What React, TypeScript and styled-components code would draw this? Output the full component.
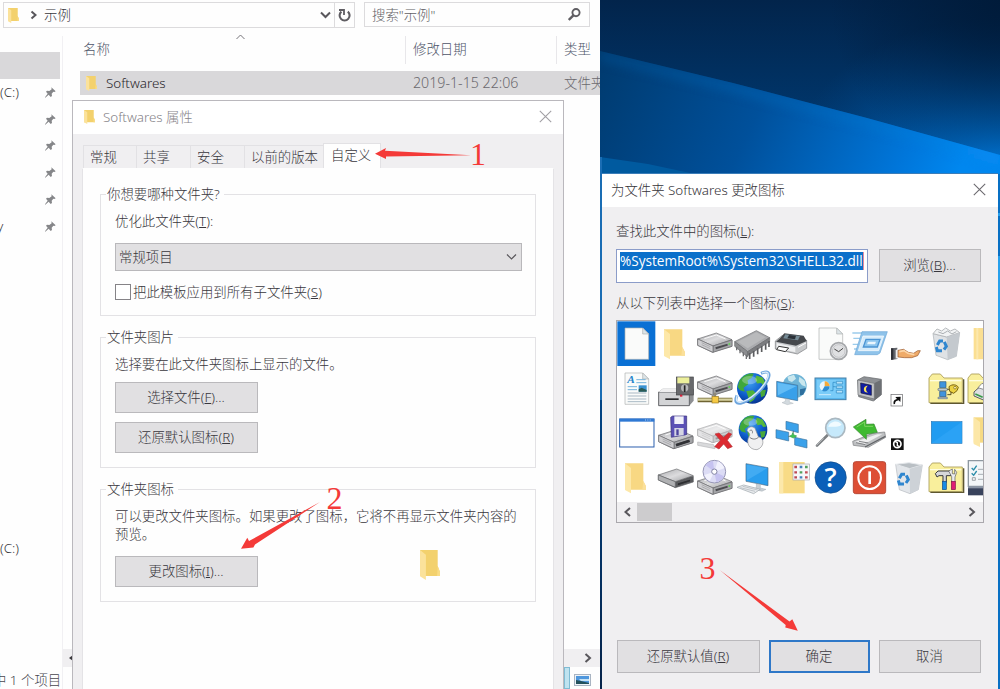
import React from "react";
import styled, { createGlobalStyle } from "styled-components";

const Global = createGlobalStyle`
  * { box-sizing: border-box; }
  body {
    margin: 0;
    overflow: hidden;
    font-family: "Noto Sans", "Noto Sans CJK SC", sans-serif;
    font-size: 13.4px;
    font-weight: 300;
    line-height: 18px;
    color: #38363c;
  }
  svg { display: block; flex: none; }
`;

/* ---------- desktop ---------- */
const Desktop = styled.main`
  position: relative;
  width: 1000px;
  height: 689px;
  overflow: hidden;
  background: #032a52;
`;
const Wallpaper = styled.svg`
  position: absolute;
  left: 600px;
  top: 0;
`;
const Marks = styled.svg`
  position: absolute;
  left: 0;
  top: 0;
  pointer-events: none;
`;

/* ---------- explorer ---------- */
const Explorer = styled.section`
  position: absolute;
  left: 0;
  top: 0;
  width: 600px;
  height: 689px;
  background: #fefefe;
  display: flex;
  flex-direction: column;
  overflow: hidden;
`;
const TopBar = styled.div`
  display: flex;
  padding: 2px 10px 0 3px;
  height: 36px;
  gap: 9px;
  flex: none;
`;
const AddressBar = styled.div`
  width: 352px;
  height: 26px;
  border: 1px solid #dcdbdd;
  display: flex;
  align-items: center;
  padding-left: 4px;
`;
const Crumb = styled.span`
  margin: 0 7px 0 11px;
`;
const AddressText = styled.span`
  flex: 1;
`;
const Refresh = styled.div`
  width: 20px;
  height: 24px;
  margin-left: 3px;
  border-left: 1px solid #dcdbdd;
  display: flex;
  align-items: center;
  justify-content: center;
`;
const SearchBox = styled.div`
  width: 226px;
  height: 25px;
  border: 1px solid #dcdbdd;
  display: flex;
  align-items: center;
  justify-content: space-between;
  padding: 0 8px 0 7px;
  color: #616064;
`;
const Main = styled.div`
  display: flex;
  flex: 1;
  min-height: 0;
`;
const Nav = styled.nav`
  width: 63px;
  border-right: 1px solid #f1f0f3;
  padding-top: 16px;
  flex: none;
`;
const NavItem = styled.div<{ $active?: boolean; $gap?: number }>`
  height: ${(p) => (p.$active ? 27 : 26.8)}px;
  margin-top: ${(p) => p.$gap ?? 0}px;
  width: 60px;
  background: ${(p) => (p.$active ? "#d9d8da" : "transparent")};
  display: flex;
  align-items: center;
  justify-content: space-between;
  padding-right: 4px;
  white-space: nowrap;
`;
const Clipped = styled.span`
  margin-left: -3px;
`;
const Status = styled.div`
  margin: 109px 0 0 -7px;
  white-space: nowrap;
  color: #47464f;
`;
const Files = styled.div`
  flex: 1;
  display: flex;
  flex-direction: column;
  min-width: 0;
`;
const Columns = styled.div`
  height: 35px;
  display: grid;
  grid-template-columns: 343px 151px 50px;
  color: #4d5468;
`;
const Column = styled.div<{ $pad: number }>`
  height: 28px;
  padding: 4px 0 0 ${(p) => p.$pad}px;
  border-right: 1px solid #e8e7ea;
  display: flex;
  white-space: nowrap;
`;
const SortMark = styled.span`
  margin: -6px 0 0 126px;
`;
const FileRow = styled.div`
  margin-left: 17px;
  height: 24px;
  background: #d9d8da;
  display: grid;
  grid-template-columns: 26px 307px 151px 60px;
  align-items: center;
  color: #6b696e;
  white-space: nowrap;
  overflow: hidden;
`;
const FileIcon = styled.span`
  padding-left: 6px;
`;
const FileName = styled.span`
  color: #29272c;
`;
const FileDate = styled.span`
  font-size: 14.2px;
`;
const FileScroll = styled.div`
  margin-top: auto;
  height: 18px;
  background: #f0eff1;
  display: flex;
  align-items: center;
  justify-content: space-between;
  padding: 0 8px 0 6px;
`;
const ViewModes = styled.div`
  height: 22px;
  padding-left: 501px;
  display: flex;
  align-items: flex-end;
  gap: 4px;
`;
const ModeSelected = styled.span`
  width: 6px;
  height: 22px;
  background: #bfe3f0;
  border: 1px solid #7fbcd4;
`;
const ModeIcon = styled.span`
  padding-bottom: 3px;
`;

/* ---------- dialogs ---------- */
const Properties = styled.section`
  position: absolute;
  left: 72px;
  top: 100px;
  width: 492px;
  height: 620px;
  background: #f0eff1;
  border: 1px solid #bab8bd;
`;
const ChangeIcon = styled.section`
  position: absolute;
  left: 602px;
  top: 173px;
  width: 396px;
  height: 560px;
  background: #f0eff1;
  border-top: 1px solid #3b7db8;
`;
const TitleBar = styled.header<{ $muted?: boolean }>`
  height: 33px;
  background: #fff;
  display: flex;
  align-items: center;
  padding: 0 ${(p) => (p.$muted ? 11 : 12)}px 2px ${(p) => (p.$muted ? 11 : 9)}px;
  color: ${(p) => (p.$muted ? "#87858a" : "#353338")};
`;
const TitleText = styled.span<{ $gap?: number }>`
  flex: 1;
  margin-left: ${(p) => p.$gap ?? 0}px;
`;
const Tabs = styled.div`
  height: 34px;
  padding-left: 10px;
  display: flex;
  align-items: flex-end;
`;
const Tab = styled.div<{ $w: number; $active?: boolean }>`
  width: ${(p) => p.$w}px;
  height: ${(p) => (p.$active ? 25 : 23)}px;
  background: ${(p) => (p.$active ? "#fefefe" : "#f0eff1")};
  border: 1px solid #e2e1e4;
  border-bottom: 0;
  margin-right: ${(p) => (p.$active ? 0 : -1)}px;
  padding: 2px 0 0 ${(p) => (p.$active ? 7 : 6)}px;
  white-space: nowrap;
`;
const Page = styled.div`
  margin-left: 9px;
  width: 472px;
  height: 540px;
  background: #fefefe;
  border: 1px solid #e4e3e6;
  border-top-color: #fefefe;
  padding: 16px 17px 0 17px;
`;
const Group = styled.fieldset<{ $h: number; $gap: number }>`
  margin: 0 0 ${(p) => p.$gap}px;
  height: ${(p) => p.$h}px;
  min-width: 0;
  border: 1px solid #e3e2e5;
  padding: 9px 13px 0 14px;
`;
const Legend = styled.legend`
  margin-left: -9px;
  padding: 0 4px 0 1px;
  height: 18px;
`;
const Select = styled.div`
  margin-top: 13px;
  height: 28px;
  background: #e1e0e2;
  border: 1px solid #b9b8bb;
  display: flex;
  align-items: center;
  justify-content: space-between;
  padding: 0 4px 1px 3px;
`;
const CheckRow = styled.div`
  display: flex;
  align-items: center;
  gap: 2px;
  margin-top: 12px;
`;
const Box = styled.span`
  width: 16px;
  height: 16px;
  border: 1px solid #858387;
  background: #fff;
`;
const Button = styled.button<{ $w: number; $h?: number; $primary?: boolean; $top?: number }>`
  display: block;
  width: ${(p) => p.$w}px;
  height: ${(p) => p.$h ?? 31}px;
  margin: ${(p) => p.$top ?? 0}px 0 0;
  padding: 0 1px 2px 0;
  background: #e1e0e2;
  border: ${(p) => (p.$primary ? "2px solid #2f78c8" : "1px solid #bab9bc")};
  font: inherit;
  color: inherit;
`;
const IconPreview = styled.div`
  display: flex;
  justify-content: space-between;
  padding-right: 82px;
`;
const PreviewIcon = styled.span`
  margin-top: 7px;
`;
const Body = styled.div`
  padding: 15px 14px 0 14px;
`;
const PathRow = styled.div`
  display: flex;
  gap: 11px;
  margin: 9px 0 11px;
`;
const PathField = styled.div`
  width: 252px;
  height: 34px;
  background: #fff;
  border: 1px solid #8b9cc9;
  padding: 2px 3px;
  white-space: nowrap;
`;
const Selection = styled.span`
  display: block;
  width: 244px;
  height: 18px;
  overflow: hidden;
  background: #0b70ca;
  color: #fff;
  border-right: 1px solid #e08aa0;
  font-family: "Open Sans", sans-serif;
  font-size: 13.6px;
  font-weight: 400;
  line-height: 17px;
`;
const IconList = styled.div`
  margin-top: 8px;
  width: 368px;
  height: 203px;
  border: 1px solid #aaa8ad;
  background: #fff;
  display: flex;
  flex-direction: column;
  overflow: hidden;
`;
const IconGrid = styled.div`
  height: 181px;
  width: 366px;
  overflow: hidden;
  display: grid;
  grid-template-columns: repeat(10, 38.8px);
  grid-template-rows: repeat(4, 44.67px);
`;
const ListScroll = styled.div`
  flex: 1;
  background: #f0eff1;
  display: flex;
  align-items: center;
  padding: 0 7px;
`;
const Thumb = styled.span`
  width: 35px;
  height: 18px;
  background: #cdccce;
  margin: 0 auto 0 6px;
`;
const Actions = styled.div`
  display: flex;
  gap: 9px;
  margin-top: 117px;
  padding-left: 1px;
`;
const U = styled.u`
  text-underline-offset: 1px;
  text-decoration-thickness: 1px;
`;

/* ---------- small icons ---------- */
const Folder = ({ w, h }: { w: number; h: number }) => (
  <svg width={w} height={h} viewBox="0 0 61 90" preserveAspectRatio="none">
    <path d="M0 0H54V48L61 66V78H0Z" fill="#f3d16d" />
    <path d="M54 48L61 66V78H52Z" fill="#f9dc86" />
    <path d="M0 0L18 14V90L0 79Z" fill="#fbe29b" />
  </svg>
);
const Chevron = ({ d, w = 10, h = 10, s = "#59575c", t = 2 }: { d: string; w?: number; h?: number; s?: string; t?: number }) => (
  <svg width={w} height={h} viewBox={`0 0 ${w} ${h}`}>
    <path d={d} fill="none" stroke={s} strokeWidth={t} />
  </svg>
);
const Close = ({ c }: { c: string }) => (
  <svg width="13" height="13" viewBox="0 0 13 13">
    <path d="M.8 .8L12.2 12.2M12.2 .8L.8 12.2" stroke={c} strokeWidth="1.1" />
  </svg>
);
const Pin = () => (
  <svg width="11" height="11" viewBox="0 0 33 33">
    <path d="M19 1L32 13L28 15L25 14L20 20L21 27L17 30L11 23L1 32L0 31L8 20L3 14L6 11L13 12L20 7Z" fill="#858689" />
  </svg>
);

/* ---------- icon library glyphs, each drawn on a 116.4 x 134 cell ---------- */
const Drive = ({ y = 0, x = 0, light = true }: { y?: number; x?: number; light?: boolean }) => (
  <g transform={`translate(${x} ${y})`} stroke="#6b6b6e" strokeWidth="2">
    <path d="M8 54V73L52 94L111 76V57Z" fill="#909194" />
    <path d="M8 54L64 36L111 56L54 75Z" fill="url(#metal)" />
    <path d="M54 75V94L111 76V57Z" fill="#a4a5a8" />
    <path d="M8 54L54 75V94L8 73Z" fill="#cfcfd2" />
    <path d="M28 53L64 42L92 54" fill="none" stroke="#fafafa" strokeWidth="3" />
    <path d="M20 65L46 77M20 71L46 83" stroke="#98999c" />
    <path d="M62 82L98 71" stroke="#4b4b4f" strokeWidth="6" />
    {light && <circle cx="103" cy="69" r="3" fill="#62cf55" stroke="none" />}
  </g>
);
const Sheet = () => (
  <g>
    <path d="M24 21H77L95 39V115H24Z" fill="#fafbfa" stroke="#aeb0b0" strokeWidth="2" />
    <path d="M77 21V39H95Z" fill="#dde5e8" stroke="#aeb0b0" strokeWidth="2" />
  </g>
);
const BigFolder = () => (
  <g>
    <path d="M24 25H79V78L87 94V104H24Z" fill="#f8d883" />
    <path d="M24 25L42 39V115L24 105Z" fill="#fde8a9" />
    <path d="M79 78L87 94V104H76Z" fill="#fbe09a" />
  </g>
);
const OldFolder = () => (
  <g>
    <path d="M6 110V36L16 24H40L51 36H106V110Z" fill="#f9ef9c" stroke="#a89b55" strokeWidth="2.5" />
    <path d="M9 44H103" stroke="#fffde0" strokeWidth="4" />
    <path d="M10 112H110V40" fill="none" stroke="#5e5730" strokeWidth="4" />
  </g>
);
const Globe = ({ cx, cy, r }: { cx: number; cy: number; r: number }) => (
  <g transform={`translate(${cx} ${cy}) scale(${r / 45})`}>
    <circle r="45" fill="url(#sea)" />
    <path d="M-38 -22C-26 -42 -8 -46 4 -43L-2 -30L-14 -24L-12 -12L-26 -2L-22 10L-36 6L-43 -4Z" fill="#3fa83b" />
    <path d="M12 -38L30 -32L42 -10L32 -8L26 -16L14 -14L8 -26Z" fill="#57b93c" />
    <path d="M-18 8L2 6L14 18L4 34L-8 42L-12 26Z" fill="#4fb23a" />
    <path d="M22 6L40 4L36 22L26 26Z" fill="#49a83a" />
    <ellipse cx="-8" cy="-24" rx="22" ry="12" fill="#fff" opacity=".28" />
  </g>
);
const Recycle = ({ x, y }: { x: number; y: number }) => (
  <g transform={`translate(${x} ${y})`} fill="none" stroke="#2f86cf" strokeWidth="9">
    <path d="M-12 -3L-5 -15H5" />
    <path d="M9 -12L15 1L8 11" />
    <path d="M2 14H-12L-15 3" />
  </g>
);

const glyphs: React.ReactNode[] = [
  <>
    <rect x="1" y="1" width="114" height="134" fill="#0a70d4" />
    <Sheet />
  </>,
  <BigFolder />,
  <Drive />,
  <g stroke="#68696c" strokeWidth="2">
    <path d="M5 62L70 29L110 50L44 92Z" fill="#a9aaad" />
    <path d="M14 62L70 34L98 49L44 82Z" fill="#b9babc" stroke="none" />
    <path d="M5 62V76L44 108V92Z" fill="#8c8d90" />
    <path d="M44 92V104L110 62V50Z" fill="#7b7c7f" />
    <path d="M50 96V114M62 90V107M74 82V100M86 75V93M98 68V86M108 60V78" stroke="#5c5d60" strokeWidth="5" />
    <path d="M11 78V88M21 86V97M31 94V106M40 101V114" stroke="#6d6e71" strokeWidth="4" />
  </g>,
  <g>
    <path d="M10 60L30 44L104 58V82L76 99L10 84Z" fill="#c7c9cb" stroke="#77797c" strokeWidth="2" />
    <path d="M24 52L37 37L95 44L104 60L72 74L12 62Z" fill="#45484c" />
    <path d="M40 40L84 45L78 58L34 52Z" fill="#758b96" />
    <path d="M51 42L72 44L69 55L46 52Z" fill="#2b3138" />
    <path d="M14 66L70 79V94L14 82Z" fill="#eeeff0" />
    <path d="M20 76L50 81L40 92L14 86Z" fill="#fff" stroke="#333" strokeWidth="3" />
    <path d="M78 79L102 66" stroke="#fff" strokeWidth="3" />
  </g>,
  <g>
    <Sheet />
    <circle cx="83" cy="90" r="25" fill="#e5e6e8" stroke="#a5a7aa" strokeWidth="5" />
    <circle cx="83" cy="90" r="19" fill="#dfe0e2" stroke="#b5b7ba" strokeWidth="2" />
    <path d="M70 84L83 92L96 82" fill="none" stroke="#444" strokeWidth="3" />
  </g>,
  <g>
    <path d="M7 36H42M10 52H38M8 70H34M12 84H30" stroke="#9cccec" strokeWidth="4" />
    <path d="M36 32H112L90 96L82 101H14Z" fill="#8fc3ea" stroke="#6ba6d6" strokeWidth="2" />
    <path d="M39 45H101L86 89H25Z" fill="#d6ecfb" stroke="#fff" strokeWidth="2" />
    <path d="M48 55H90L82 78H40Z" fill="#8cc5ee" stroke="#4b94d3" strokeWidth="4" />
    <path d="M54 62H78L75 70H51Z" fill="#eaf6fe" />
  </g>,
  <g>
    <path d="M6 82L25 80V114L6 117Z" fill="#62656c" />
    <path d="M6 82H13V116H6Z" fill="#2e3036" />
    <path d="M20 87L27 85V111L20 113Z" fill="#eee" />
    <path d="M27 88L44 85L58 94L74 97L86 89L94 89L86 104L68 110H46L27 108Z" fill="#efab69" stroke="#94552c" strokeWidth="2" />
    <path d="M31 92L45 89L57 97L76 101" fill="none" stroke="#fbd5a8" strokeWidth="5" />
  </g>,
  <g>
    <path d="M18 38L59 48L98 35L88 106L62 116L27 103Z" fill="#dfe2e5" stroke="#abb0b5" strokeWidth="2" />
    <path d="M18 38L30 24L44 30L56 21L70 30L84 24L98 35L59 48Z" fill="#f1f3f4" stroke="#b7babd" strokeWidth="3" />
    <path d="M59 48L98 35L88 106L62 116Z" fill="#c4c9ce" />
    <path d="M34 33L48 38L62 30L75 39L88 32" fill="none" stroke="#abafb3" strokeWidth="3" />
    <Recycle x={43} y={75} />
  </g>,
  <>
    <path d="M23 21H110V115H23Z" fill="#fbdf92" />
    <path d="M34 21V115" stroke="#fce8ad" strokeWidth="6" />
  </>,

  <g>
    <Sheet />
    <text x="31" y="52" fontSize="34" fontStyle="italic" fontWeight="700" fill="#2684cb" fontFamily="Liberation Serif, serif">A</text>
    <path d="M58 41H86M58 50H88M32 62H60M32 71H60" stroke="#74b3dd" strokeWidth="3" />
    <path d="M32 81H88M32 90H88M32 99H88M32 107H88" stroke="#a9b9c4" strokeWidth="3" />
    <rect x="65" y="58" width="24" height="19" fill="#3a92d2" />
    <path d="M65 77V70L74 65L89 72V77Z" fill="#2b5b55" />
  </g>,
  <g>
    <path d="M8 78L20 68H113V104L100 119H8Z" fill="#8d8f92" />
    <path d="M8 78H100V119H8Z" fill="#d3d4d6" stroke="#66686b" strokeWidth="3" />
    <path d="M8 78L20 68H100V78Z" fill="#efeff0" />
    <rect x="28" y="97" width="40" height="5" fill="#28292b" />
    <rect x="61" y="33" width="51" height="54" fill="#68696c" stroke="#434447" strokeWidth="2" />
    <rect x="64" y="34" width="36" height="18" fill="#ecef9b" />
    <circle cx="86" cy="66" r="11" fill="#b6b7b9" />
    <path d="M86 58V78" stroke="#222" strokeWidth="5" />
    <rect x="72" y="86" width="7" height="6" fill="#d8213b" />
  </g>,
  <g>
    <Drive y={-6} />
    <path d="M8 102H112" stroke="#6f6432" strokeWidth="14" />
    <path d="M9 101H111" stroke="#d8d3a2" strokeWidth="7" />
    <path d="M60 80V94" stroke="#8f8a78" strokeWidth="7" />
    <rect x="51" y="91" width="19" height="20" fill="#f6c944" stroke="#967926" strokeWidth="2" />
  </g>,
  <g>
    <Globe cx={58} cy={67} r={46} />
    <path d="M84 22C126 4 108 50 70 84C38 112 -4 128 12 88" fill="none" stroke="#6fa6de" strokeWidth="9" />
    <path d="M87 21C122 8 104 50 69 82C38 110 0 122 13 88" fill="none" stroke="#d9ebfa" strokeWidth="4" />
  </g>,
  <g>
    <circle cx="68" cy="60" r="36" fill="#6fb4d6" />
    <path d="M46 32L66 26L72 38L60 48L50 44ZM82 32L98 44L102 62L90 58L80 46Z" fill="#c9e7ee" />
    <path d="M84 70L102 66L94 86L84 88Z" fill="#2e6f9e" />
    <path d="M14 46L77 58V104L14 92Z" fill="#38a0ea" stroke="#456f93" strokeWidth="2" />
    <path d="M17 50L74 60L18 88Z" fill="#63bcf5" />
    <path d="M40 98L52 100V108L64 112L46 116L30 110L40 106Z" fill="#d3dadf" stroke="#9aa3aa" strokeWidth="1" />
  </g>,
  <g>
    <rect x="12" y="36" width="93" height="65" fill="#56b5ec" stroke="#4780a8" strokeWidth="3" />
    <rect x="17" y="41" width="83" height="55" fill="#7accf8" />
    <circle cx="41" cy="61" r="15" fill="#eaf6fc" />
    <path d="M41 61V46A15 15 0 0 1 56 61Z" fill="#f6aa38" />
    <path d="M41 61H56A15 15 0 0 1 33 74Z" fill="#2d8ed3" />
    <path d="M58 74H66V49H74M66 62H74" fill="none" stroke="#2787c2" strokeWidth="2" />
    <path d="M76 46H95V54H76ZM76 60H95V67H76ZM76 73H95V81H76Z" fill="#b5e1f8" stroke="#2787c2" strokeWidth="2" />
    <path d="M24 86H60" stroke="#c9ebfc" strokeWidth="3" />
  </g>,
  <g>
    <path d="M23 42L42 32L94 40V86L70 105L26 92Z" fill="#8e9195" stroke="#606367" strokeWidth="2" />
    <path d="M72 52L94 41V86L72 104Z" fill="#6d7074" />
    <path d="M23 42L73 52V99L24 87Z" fill="#c1c3c6" stroke="#707276" strokeWidth="2" />
    <path d="M32 51L64 58V88L33 81Z" fill="#111ea3" stroke="#0d1238" strokeWidth="2" />
    <path d="M53 59C43 58 38 70 45 78L54 80C47 74 46 66 53 59Z" fill="#fbe557" />
  </g>,
  <g>
    <rect x="6" y="86" width="34" height="34" fill="#fff" stroke="#646568" strokeWidth="2" />
    <path d="M14 115C12 105 16 101 24 99L19 93L35 92L34 108L29 103C22 104 18 107 18 114Z" fill="#111" />
  </g>,
  <g>
    <OldFolder />
    <path d="M38 47H57V65H38ZM38 76H57V92H38Z" fill="#3f93dd" stroke="#305a83" strokeWidth="2" />
    <path d="M33 68H61V73H33ZM33 94H61V98H33Z" fill="#dfe6ef" stroke="#50657a" strokeWidth="2" />
    <path d="M61 70H72V86H61M72 78H80" fill="none" stroke="#554b25" strokeWidth="3" />
    <path d="M66 62C76 53 90 56 94 64L90 74L80 82L68 76Z" fill="#ecd242" stroke="#776112" strokeWidth="3" />
    <circle cx="84" cy="65" r="4" fill="#fff6b0" stroke="#776112" strokeWidth="2" />
  </g>,
  <g>
    <OldFolder />
    <path d="M24 78L46 58L80 70V90L52 102L24 90Z" fill="#dfe0e2" stroke="#5b5c5f" strokeWidth="3" />
    <path d="M36 65L48 52L66 60L58 72Z" fill="#fff" stroke="#5b5c5f" strokeWidth="2" />
    <path d="M28 84L50 94" stroke="#3a9a4a" strokeWidth="5" />
  </g>,

  <g>
    <rect x="8" y="27" width="103" height="84" fill="#fff" stroke="#2b5fae" strokeWidth="3" />
    <rect x="7" y="26" width="105" height="9" fill="#2f79d4" />
    <path d="M84 30H104" stroke="#fff" strokeWidth="2" strokeDasharray="3 4" />
  </g>,
  <g>
    <g transform="translate(0 22)"><Drive light={false} /></g>
    <path d="M44 22L50 18H92V74L46 82Z" fill="#5b51b5" stroke="#383078" strokeWidth="2" />
    <path d="M55 19H83V42H55Z" fill="#f2f2fa" />
    <path d="M55 54H83V76L55 79Z" fill="#d4d5e3" />
    <path d="M61 58H68V76H61Z" fill="#4b439d" />
    <path d="M60 106L101 92" stroke="#303135" strokeWidth="8" />
  </g>,
  <g>
    <g opacity=".55"><Drive y={4} light={false} /></g>
    <path d="M8 96L56 104L60 116L8 106Z" fill="#d9dadc" stroke="#b6b7ba" strokeWidth="2" />
    <path d="M60 72L72 69L86 82L101 68L110 72L97 91L112 110L98 116L86 102L72 117L59 110L76 91Z" fill="#dc2a31" stroke="#b5383c" strokeWidth="2" />
  </g>,
  <g>
    <Globe cx={60} cy={59} r={43} />
    <path d="M42 61C46 46 66 48 68 60L76 80C96 84 94 112 72 119C48 120 38 96 48 80C54 72 46 68 42 61Z" fill="#f0f0f1" stroke="#8f9194" strokeWidth="2" />
    <path d="M50 82C60 90 70 88 77 81M50 62C56 58 60 62 58 70" fill="none" stroke="#77797c" strokeWidth="3" />
  </g>,
  <g stroke="#44759d" strokeWidth="2">
    <path d="M42 34L79 43V68L42 58Z" fill="#3aa1ea" />
    <path d="M12 59L50 67V93L12 84Z" fill="#3aa1ea" />
    <path d="M68 82L105 90V114L68 105Z" fill="#3aa1ea" />
    <path d="M49 80L58 77M64 62V74M72 82L66 78" stroke="#53595e" />
    <path d="M62 68L64 74L74 78L64 84L53 79L60 75Z" fill="#42c353" stroke="#30a747" />
  </g>,
  <g>
    <path d="M50 75L18 107" stroke="#7d8083" strokeWidth="8" strokeLinecap="round" />
    <path d="M38 85L17 106" stroke="#b5b7b9" strokeWidth="3" />
    <circle cx="73" cy="54" r="29" fill="#c6e9fb" stroke="#aab8c1" strokeWidth="5" />
    <path d="M52 51C55 36 79 27 92 44C78 54 64 49 52 51Z" fill="#f1fbff" />
  </g>,
  <g>
    <path d="M8 94L68 70L104 66L107 82L55 112L10 106Z" fill="#bec0c2" stroke="#77797c" strokeWidth="2" />
    <path d="M14 96L82 73L97 73L43 102Z" fill="#efeff0" />
    <path d="M45 111L106 79" stroke="#626468" strokeWidth="4" />
    <path d="M18 98L46 104M27 94L55 99" stroke="#818386" strokeWidth="3" />
    <path d="M10 51L48 28V43L72 42L82 67L49 73V88Z" fill="#3fba31" stroke="#34852c" strokeWidth="2" />
    <path d="M20 51L44 36V49H69" fill="none" stroke="#7ed562" strokeWidth="3" />
  </g>,
  <g>
    <rect x="6" y="85" width="38" height="35" fill="#111" />
    <circle cx="25" cy="102" r="11" fill="none" stroke="#fff" strokeWidth="5" />
    <path d="M18 94L25 98V107L32 110" fill="none" stroke="#fff" strokeWidth="4" />
  </g>,
  <g>
    <rect x="13" y="35" width="92" height="65" fill="#219cf1" stroke="#2479bb" strokeWidth="2" />
    <path d="M14 99L104 36V99Z" fill="#2ba2f5" />
  </g>,
  <>
    <path d="M23 22H110V98H23Z" fill="#f7da83" />
    <path d="M23 22L42 36V111L23 102Z" fill="#fce7a7" />
  </>,

  <BigFolder />,
  <g stroke="#67686b" strokeWidth="2">
    <path d="M7 60V75L58 98L112 81V64Z" fill="#57585b" />
    <path d="M7 60L62 42L112 62L58 80Z" fill="url(#metal)" />
    <path d="M7 60L58 80V97L7 75Z" fill="#b0b1b3" />
    <path d="M64 84L104 72V80L64 93Z" fill="#2e2f32" />
  </g>,
  <g>
    <Drive y={24} />
    <circle cx="58" cy="50" r="34" fill="#dcdcf5" stroke="#9797b6" strokeWidth="3" />
    <path d="M58 50L32 31A32 32 0 0 1 54 18ZM58 50L87 64A32 32 0 0 1 64 81Z" fill="#c6c3f0" />
    <path d="M58 50L68 19A32 32 0 0 1 88 40ZM58 50L28 60A32 32 0 0 0 44 78Z" fill="#f2f2fd" />
    <circle cx="58" cy="50" r="8" fill="#fff" stroke="#8183a4" strokeWidth="3" />
  </g>,
  <g>
    <path d="M39 26L105 38V92L39 79Z" fill="#299ded" stroke="#4b6a84" strokeWidth="2" />
    <path d="M41 29L102 40L42 76Z" fill="#42abf2" />
    <path d="M70 87L82 89V99L99 103L87 109L60 102L70 98Z" fill="#c8cfd4" stroke="#8d969d" strokeWidth="1" />
    <path d="M12 97L32 90L82 103L62 116Z" fill="#e8ebed" stroke="#9ba3a9" strokeWidth="2" />
    <path d="M22 98L66 109M29 94L74 105" stroke="#aab1b6" strokeWidth="2" />
  </g>,
  <g>
    <path d="M22 21H98V115H22Z" fill="#f8db86" />
    <path d="M22 21H34V115H22Z" fill="#fce8ab" />
    <rect x="63" y="27" width="49" height="48" fill="#f7f7f9" stroke="#a7a9ae" strokeWidth="2" />
    <path d="M67 36H75M67 52H75M67 67H75" stroke="#bc4a54" strokeWidth="7" />
    <path d="M83 36H91M83 67H91" stroke="#4681bd" strokeWidth="7" />
    <path d="M83 52H91M99 36H107" stroke="#52a15e" strokeWidth="7" />
    <path d="M99 52H107M99 67H107" stroke="#c54e58" strokeWidth="7" />
  </g>,
  <g>
    <circle cx="59" cy="67.5" r="47" fill="#0b60b9" stroke="#154b87" strokeWidth="2" />
    <text x="59" y="96" textAnchor="middle" fontSize="80" fill="#fff" fontFamily="Open Sans, sans-serif" fontWeight="600">?</text>
  </g>,
  <g>
    <rect x="10" y="20" width="97" height="96" rx="7" fill="#dd4f35" stroke="#b94836" strokeWidth="3" />
    <circle cx="59" cy="68" r="34" fill="none" stroke="#fff" strokeWidth="6" />
    <path d="M59 49V87" stroke="#fff" strokeWidth="8" />
  </g>,
  <g>
    <path d="M20 28L62 38L100 30L88 104L63 116L31 104Z" fill="#e3e6ea" stroke="#b5babf" strokeWidth="2" />
    <path d="M20 28L60 23L100 30L62 41Z" fill="#b9bfc4" stroke="#e6e9ec" strokeWidth="3" />
    <path d="M62 41L99 31L88 104L63 116Z" fill="#cdd2d7" />
    <Recycle x={43} y={73} />
  </g>,
  <g>
    <OldFolder />
    <path d="M25 56L33 48H72V62H58V82H48V62H36L30 66Z" fill="#d6d7d9" stroke="#37383b" strokeWidth="3" />
    <path d="M65 48L76 42V56L83 57V43L89 52L84 66V82H74V65Z" fill="#ececee" stroke="#55575a" strokeWidth="2" />
    <rect x="46" y="79" width="12" height="25" fill="#178be4" stroke="#174b83" strokeWidth="2" />
    <rect x="73" y="79" width="12" height="25" fill="#e01c74" stroke="#7e1744" strokeWidth="2" />
  </g>,
  <g>
    <path d="M7 17H100V94H7Z" fill="#f3f6f8" stroke="#8e98a0" strokeWidth="4" />
    <path d="M17 39L23 45L32 32M17 55L23 61L32 48" fill="none" stroke="#2a8da9" strokeWidth="4" />
    <path d="M19 68H28V76H19Z" fill="none" stroke="#777e84" strokeWidth="2" />
    <path d="M36 43H70M36 58H70M36 73H70" stroke="#a8afb5" strokeWidth="3" />
    <path d="M6 97H100V121H6Z" fill="#39435c" />
    <path d="M6 94H100V100H6Z" fill="#8a94a4" />
  </g>,
];

const GlyphDefs = () => (
  <defs>
    <linearGradient id="metal" x1="0" y1="0" x2="1" y2="1">
      <stop offset="0" stopColor="#a8a9ac" />
      <stop offset=".5" stopColor="#dcdcde" />
      <stop offset="1" stopColor="#98999c" />
    </linearGradient>
    <radialGradient id="sea" cx=".4" cy=".3" r=".75">
      <stop offset="0" stopColor="#3fa0f0" />
      <stop offset=".6" stopColor="#0d5ccb" />
      <stop offset="1" stopColor="#062f8a" />
    </radialGradient>
  </defs>
);

export default function App() {
  return (
    <Desktop>
      <Global />
      <Wallpaper width="400" height="689" viewBox="0 0 400 689">
        <defs>
          <linearGradient id="sky" x1="0" y1="0" x2="0" y2="1">
            <stop offset="0" stopColor="#02244b" />
            <stop offset=".2" stopColor="#003a72" />
            <stop offset=".5" stopColor="#004a90" />
            <stop offset="1" stopColor="#062349" />
          </linearGradient>
          <radialGradient id="glow" gradientUnits="userSpaceOnUse" cx="400" cy="165" r="210" gradientTransform="translate(0 50) scale(1 .7)">
            <stop offset="0" stopColor="#0079dc" />
            <stop offset=".4" stopColor="#0062b7" stopOpacity=".75" />
            <stop offset="1" stopColor="#004a90" stopOpacity="0" />
          </radialGradient>
          <radialGradient id="corner" gradientUnits="userSpaceOnUse" cx="400" cy="0" r="170">
            <stop offset="0" stopColor="#001b3a" />
            <stop offset="1" stopColor="#001b3a" stopOpacity="0" />
          </radialGradient>
          <linearGradient id="beam" x1="0" y1="0" x2="1" y2=".2">
            <stop offset="0" stopColor="#003a6e" />
            <stop offset=".45" stopColor="#00509b" />
            <stop offset=".85" stopColor="#0076da" />
            <stop offset="1" stopColor="#0087ef" />
          </linearGradient>
          <linearGradient id="edge" x1="0" y1="0" x2="1" y2="0">
            <stop offset="0" stopColor="#064a88" />
            <stop offset=".5" stopColor="#0564b5" />
            <stop offset="1" stopColor="#078df5" />
          </linearGradient>
          <filter id="soft"><feGaussianBlur stdDeviation="4" /></filter>
          <clipPath id="below"><path d="M0 51L133 83L267 118L400 155V220H0Z" /></clipPath>
        </defs>
        <rect width="400" height="689" fill="url(#sky)" />
        <rect width="400" height="200" fill="url(#glow)" />
        <rect width="400" height="170" fill="url(#corner)" />
        <g clipPath="url(#below)">
          <rect y="51" width="400" height="169" fill="url(#beam)" />
          <path d="M0 56L133 88L267 123L400 160" fill="none" stroke="url(#edge)" strokeWidth="12" opacity=".6" filter="url(#soft)" />
        </g>
        <path d="M0 157L48 164L95 174H0Z" fill="#005a9f" />
        <path d="M0 157H2V400H0Z" fill="#1a6db4" />
        <path d="M397 174H400V689H397Z" fill="#0870c4" />
        <path d="M397 213H400V216H397ZM397 256H400V360H397Z" fill="#27a0ec" />
      </Wallpaper>

      <Explorer>
        <TopBar>
          <AddressBar>
            <Folder w={11} h={15} />
            <Crumb><Chevron d="M1.5 1.5L5.5 5L1.5 8.5" w={7} /></Crumb>
            <AddressText>示例</AddressText>
            <Chevron d="M1 2.5L5.5 7L10 2.5" w={11} h={10} />
            <Refresh>
              <svg width="13" height="13" viewBox="0 0 13 13">
                <path d="M9.8 2.6A5 5 0 1 1 3.4 2.6" fill="none" stroke="#5f5d62" strokeWidth="2.1" />
                <path d="M1 1H6V6" fill="none" stroke="#5f5d62" strokeWidth="1.8" />
              </svg>
            </Refresh>
          </AddressBar>
          <SearchBox>
            搜索"示例"
            <svg width="13" height="13" viewBox="0 0 13 13">
              <circle cx="8" cy="4.6" r="3.6" fill="none" stroke="#605e63" strokeWidth="1.9" />
              <path d="M5.4 7.4L.8 12" stroke="#605e63" strokeWidth="2.4" />
            </svg>
          </SearchBox>
        </TopBar>
        <Main>
          <Nav>
            <NavItem $active />
            <NavItem>(C:)<Pin /></NavItem>
            <NavItem><span /><Pin /></NavItem>
            <NavItem><span /><Pin /></NavItem>
            <NavItem><span /><Pin /></NavItem>
            <NavItem><span /><Pin /></NavItem>
            <NavItem><Clipped>y</Clipped><Pin /></NavItem>
            <NavItem $gap={295}>(C:)</NavItem>
            <Status>中 1 个项目</Status>
          </Nav>
          <Files>
            <Columns>
              <Column $pad={20}>
                名称
                <SortMark><Chevron d="M.5 5L4.5 1L8.5 5" w={9} h={6} s="#77757a" t={1} /></SortMark>
              </Column>
              <Column $pad={7}>修改日期</Column>
              <Column $pad={7}>类型</Column>
            </Columns>
            <FileRow>
              <FileIcon><Folder w={11} h={15} /></FileIcon>
              <FileName>Softwares</FileName>
              <FileDate>2019-1-15 22:06</FileDate>
              <span>文件夹</span>
            </FileRow>
            <FileScroll>
              <svg width="5" height="6" viewBox="0 0 5 6"><path d="M4 0L0 3L4 6Z" fill="#39373c" /></svg>
              <Chevron d="M1.5 1L6 5L1.5 9" w={8} />
            </FileScroll>
            <ViewModes>
              <ModeSelected />
              <ModeIcon>
                <svg width="17" height="12" viewBox="0 0 17 12">
                  <rect x=".5" y=".5" width="16" height="11" fill="#eef3f8" stroke="#a9b4c2" />
                  <rect x="2" y="2" width="13" height="8" fill="#4f97dd" />
                  <path d="M2 10V6L7 7L15 9V10Z" fill="#24515c" />
                  <path d="M5 5H15V7H7Z" fill="#c5e2f5" />
                </svg>
              </ModeIcon>
            </ViewModes>
          </Files>
        </Main>
      </Explorer>

      <Properties>
        <TitleBar $muted>
          <Folder w={11} h={14} />
          <TitleText $gap={8}>Softwares 属性</TitleText>
          <Close c="#a19fa4" />
        </TitleBar>
        <Tabs>
          <Tab $w={54}>常规</Tab>
          <Tab $w={55}>共享</Tab>
          <Tab $w={55}>安全</Tab>
          <Tab $w={80}>以前的版本</Tab>
          <Tab $w={58} $active>自定义</Tab>
        </Tabs>
        <Page>
          <Group $h={131} $gap={12}>
            <Legend>你想要哪种文件夹?</Legend>
            <div>优化此文件夹(<U>T</U>):</div>
            <Select>
              常规项目
              <Chevron d="M1 2.5L5.5 7L10 2.5" w={11} h={10} t={1.2} />
            </Select>
            <CheckRow>
              <Box />
              <span>把此模板应用到所有子文件夹(<U>S</U>)</span>
            </CheckRow>
          </Group>
          <Group $h={140} $gap={12}>
            <Legend>文件夹图片</Legend>
            <div>选择要在此文件夹图标上显示的文件。</div>
            <Button $w={143} $top={9}>选择文件(<U>F</U>)...</Button>
            <Button $w={143} $top={9}>还原默认图标(<U>R</U>)</Button>
          </Group>
          <Group $h={122} $gap={0}>
            <Legend>文件夹图标</Legend>
            <div>可以更改文件夹图标。如果更改了图标，它将不再显示文件夹内容的<br />预览。</div>
            <IconPreview>
              <Button $w={143} $top={13}>更改图标(<U>I</U>)...</Button>
              <PreviewIcon><Folder w={20} h={30} /></PreviewIcon>
            </IconPreview>
          </Group>
        </Page>
      </Properties>

      <ChangeIcon>
        <TitleBar>
          <TitleText>为文件夹 Softwares 更改图标</TitleText>
          <Close c="#6c6a6f" />
        </TitleBar>
        <Body>
          <div>查找此文件中的图标(<U>L</U>):</div>
          <PathRow>
            <PathField><Selection>%SystemRoot%\System32\SHELL32.dll</Selection></PathField>
            <Button $w={102} $h={33}>浏览(<U>B</U>)...</Button>
          </PathRow>
          <div>从以下列表中选择一个图标(<U>S</U>):</div>
          <IconList>
            <IconGrid>
              {glyphs.map((g, i) => (
                <svg key={i} width="38.8" height="44.67" viewBox="0 0 116.4 134">
                  <GlyphDefs />
                  {g}
                </svg>
              ))}
            </IconGrid>
            <ListScroll>
              <Chevron d="M6 1L1.5 5L6 9" w={7} />
              <Thumb />
              <Chevron d="M1.5 1L6 5L1.5 9" w={8} />
            </ListScroll>
          </IconList>
          <Actions>
            <Button $w={143} $h={33}>还原默认值(<U>R</U>)</Button>
            <Button $w={101} $h={33} $primary>确定</Button>
            <Button $w={102} $h={33}>取消</Button>
          </Actions>
        </Body>
      </ChangeIcon>

      <Marks width="1000" height="689" viewBox="0 0 1000 689" fill="#f43a38">
        <path d="M375 153.7L386 148L385 150.7L471 155.3L386 156.5L386 159Z" />
        <path d="M241 548.8L247.3 537.7L249 541L320 502L255 544.5L253.4 547.5Z" />
        <path d="M720 570.3L789.5 621.5L792.3 619.3L797.8 630.8L785.3 627.5L785.7 625Z" />
        <g fontFamily="Liberation Serif, serif" fontSize="32" textAnchor="middle">
          <text x="478" y="165">1</text>
          <text x="334.5" y="509">2</text>
          <text x="707.5" y="578.5">3</text>
        </g>
      </Marks>
    </Desktop>
  );
}
